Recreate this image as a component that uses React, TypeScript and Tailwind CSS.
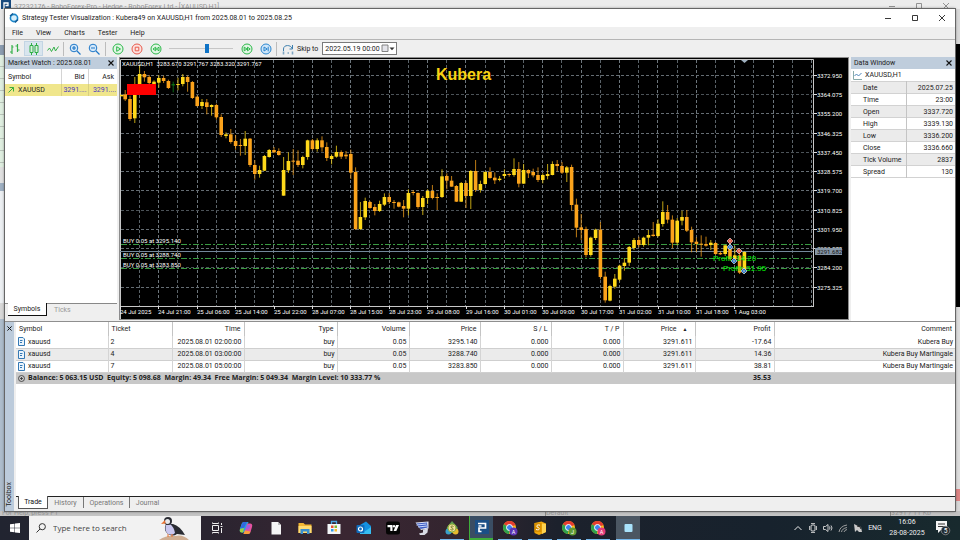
import React from "react";

type Bar = [number, number, number, number, string];

/* Each bar: high, body top, body bottom, low (thirds of a pixel below the base) and colour key. */
const SESSIONS: { base: number; first: number; bars: Bar[] }[] = [
  {
    base: 55,
    first: 0,
    bars: [
      [118, 120, 124, 124, "Y"], [105, 118, 133, 138, "O"], [122, 132, 192, 198, "O"], [66, 88, 190, 204, "Y"],
      [30, 57, 90, 95, "Y"], [48, 57, 67, 80, "O"], [60, 66, 84, 90, "O"], [76, 80, 88, 95, "Y"],
      [60, 69, 83, 98, "Y"], [62, 69, 78, 84, "O"], [74, 78, 99, 102, "O"], [80, 88, 90, 112, "G"],
      [68, 87, 90, 106, "Y"], [57, 66, 87, 94, "Y"], [62, 66, 81, 110, "O"], [78, 81, 129, 132, "O"],
      [121, 125, 153, 155, "O"], [132, 141, 153, 162, "Y"], [132, 142, 156, 178, "O"], [148, 150, 156, 182, "Y"],
      [146, 150, 187, 194, "O"], [178, 186, 240, 246, "O"], [232, 238, 243, 250, "Y"], [222, 238, 261, 266, "O"],
      [240, 258, 273, 284, "O"], [252, 270, 273, 302, "O"], [228, 251, 273, 300, "Y"], [249, 251, 330, 336, "O"],
      [315, 330, 357, 374, "O"], [332, 345, 357, 368, "Y"], [300, 303, 347, 348, "Y"], [282, 285, 306, 308, "Y"],
      [276, 285, 292, 294, "O"], [280, 288, 300, 302, "O"], [306, 345, 422, 422, "Y"], [292, 318, 346, 354, "Y"],
      [282, 317, 320, 360, "O"], [286, 317, 330, 336, "O"], [302, 306, 330, 340, "Y"], [254, 256, 306, 314, "Y"],
      [252, 256, 282, 286, "O"], [250, 256, 282, 290, "Y"], [244, 256, 277, 290, "O"], [262, 276, 309, 318, "O"],
      [298, 303, 312, 328, "Y"], [272, 291, 305, 308, "Y"], [286, 291, 305, 312, "O"], [288, 299, 304, 312, "O"],
      [284, 297, 353, 372, "O"],
    ],
  },
  {
    base: 130,
    first: 49,
    bars: [
      [112, 126, 297, 300, "O"], [216, 261, 297, 300, "Y"], [203, 213, 262, 270, "Y"], [213, 216, 234, 236, "O"],
      [222, 231, 243, 256, "O"], [212, 222, 243, 246, "Y"], [190, 201, 224, 228, "Y"], [189, 201, 216, 222, "O"],
      [210, 216, 219, 236, "O"], [215, 217, 230, 232, "O"], [210, 228, 236, 262, "O"], [178, 189, 236, 256, "Y"],
      [180, 186, 189, 196, "O"], [187, 189, 231, 236, "O"], [198, 204, 231, 255, "Y"], [178, 183, 204, 222, "Y"],
      [165, 183, 204, 208, "O"], [190, 201, 203, 240, "O"], [118, 139, 201, 204, "Y"], [130, 138, 152, 178, "O"],
      [138, 152, 170, 170, "O"], [165, 168, 215, 216, "O"], [156, 159, 215, 216, "Y"], [152, 159, 198, 234, "O"],
      [120, 123, 198, 237, "Y"], [90, 123, 180, 186, "O"], [152, 162, 180, 188, "Y"], [124, 126, 162, 164, "Y"],
      [112, 126, 144, 146, "O"], [127, 143, 151, 162, "O"], [138, 146, 150, 154, "Y"], [118, 132, 138, 146, "Y"],
      [130, 132, 135, 140, "O"], [85, 117, 135, 140, "Y"], [96, 117, 161, 172, "O"], [102, 120, 161, 161, "Y"],
      [118, 120, 130, 144, "O"], [116, 126, 136, 142, "O"], [112, 135, 150, 156, "O"], [130, 135, 150, 160, "Y"],
      [102, 132, 138, 148, "Y"], [94, 102, 135, 136, "Y"], [90, 102, 108, 124, "O"], [96, 108, 128, 132, "O"],
      [108, 112, 128, 156, "Y"], [104, 111, 225, 242, "O"],
    ],
  },
  {
    base: 140,
    first: 95,
    bars: [
      [176, 194, 263, 292, "O"], [222, 262, 270, 300, "O"], [260, 267, 345, 352, "O"], [290, 293, 345, 350, "Y"],
      [266, 269, 294, 300, "Y"], [246, 269, 411, 418, "O"], [395, 410, 481, 488, "O"], [434, 438, 482, 484, "Y"],
      [402, 416, 440, 446, "Y"], [374, 377, 419, 424, "Y"], [354, 368, 378, 392, "Y"], [318, 321, 368, 378, "Y"],
      [294, 300, 324, 330, "Y"], [290, 300, 315, 322, "O"], [290, 293, 315, 320, "Y"], [270, 285, 293, 316, "Y"],
      [246, 284, 288, 290, "O"], [238, 251, 288, 292, "Y"], [184, 216, 252, 260, "Y"], [195, 216, 239, 250, "O"],
      [226, 239, 308, 325, "O"], [234, 242, 308, 316, "Y"], [212, 231, 242, 256, "Y"], [210, 231, 272, 276, "O"],
      [260, 270, 307, 337, "O"], [292, 305, 312, 336, "O"], [286, 311, 314, 350, "O"], [290, 312, 317, 320, "O"],
      [300, 308, 315, 330, "Y"], [306, 309, 342, 345, "O"], [334, 339, 343, 345, "O"], [314, 316, 342, 348, "Y"],
      [300, 316, 357, 362, "O"], [318, 346, 358, 362, "Y"], [336, 346, 398, 402, "O"], [334, 336, 398, 402, "Y"],
    ],
  },
];

const COLORS: Record<string, string> = { Y: "#ffd91a", O: "#fba31c", G: "#0c8a1c" };

const PRICES = ["3372.950", "3364.075", "3355.200", "3346.325", "3337.450", "3328.575", "3319.700", "3310.825", "3301.950", "3293.075", "3284.200", "3275.325"];
const TIMES = ["24 Jul 2025", "24 Jul 21:00", "25 Jul 06:00", "25 Jul 14:00", "25 Jul 22:00", "28 Jul 07:00", "28 Jul 15:00", "28 Jul 23:00", "29 Jul 08:00", "29 Jul 16:00", "30 Jul 01:00", "30 Jul 09:00", "30 Jul 17:00", "31 Jul 02:00", "31 Jul 10:00", "31 Jul 18:00", "1 Aug 03:00"];
const ORDERS: [number, string][] = [[244, "BUY 0.05 at 3295.140"], [258, "BUY 0.05 at 3288.740"], [268, "BUY 0.05 at 3283.850"]];

function Chart() {
  return (
    <svg viewBox="119 57 730 264" className="block h-full w-full" role="img" aria-label="XAUUSD,H1 chart" fontFamily="Roboto, sans-serif" fontSize="6">
      <rect x="119" y="57" width="730" height="263" fill="#8c8c8c" />
      <rect x="120" y="58" width="728" height="261" fill="#000" />
      <path d="M120.5 319V59.5H813.5V306.5M120 306.5H814" stroke="#c8c8c8" fill="none" />
      {Array.from({ length: 36 }, (_, i) => {
        const x = Math.floor(139.4 + i * 19.2) + 0.5;
        return <path key={i} d={`M${x} 60V306`} stroke={i % 2 ? "#6d767c" : "#5a6268"} strokeDasharray="3 2" />;
      })}
      {PRICES.map((p, i) => {
        const y = Math.floor(75.4 + i * 19.24) + 0.5;
        return (
          <g key={p}>
            <path d={`M121 ${y}H813`} stroke={i % 3 === 1 ? "#4c5358" : "#656d73"} strokeDasharray="3 2" />
            <path d={`M814 ${y}H817`} stroke="#ddd" />
            <text x="817" y={y + 2.5} fill="#fff">{p}</text>
          </g>
        );
      })}
      <path d="M120 251.5H813" stroke="#73879a" />
      {ORDERS.map(([y, label]) => (
        <g key={label}>
          <path d={`M121 ${y + 0.5}H813`} stroke="#3a9a42" strokeDasharray="6 2 2 2" />
          <text x="123" y={y - 1} fill="#fff">{label}</text>
        </g>
      ))}
      {SESSIONS.map((s) =>
        s.bars.map(([h, t, b, l, c], i) => {
          const x = 120.4 + (s.first + i) * 4.8;
          const y = (v: number) => s.base + v / 3;
          return (
            <g key={s.first + i} fill={COLORS[c]}>
              <rect x={x - 0.5} y={y(h)} width="1" height={(l - h) / 3} opacity="0.75" />
              <rect x={Math.max(x - 1.8, 120)} y={y(t)} width="3.6" height={Math.max((b - t) / 3, 1)} />
            </g>
          );
        })
      )}
      <rect x="127" y="84" width="29" height="11" fill="#f00" />
      <text x="122" y="65.5" fill="#fff">XAUUSD,H1&nbsp; 3283.670 3291.767 3283.320 3291.767</text>
      <text x="436" y="80" fontSize="16" fontWeight="700" fill="#f8d313" fontFamily="'Liberation Sans', sans-serif">Kubera</text>
      <path d="M741 60h7l-3.500 3z" fill="#9fb0bf" />
      <g fontFamily="'Liberation Sans', sans-serif" fontSize="8" fill="#00f000">
        <text x="713" y="261">Profit: 14.20</text>
        <text x="723" y="271">Profit: 31.95</text>
      </g>
      {[[730, 241, 1], [730, 247, 0], [739, 251, 1], [734, 261, 0], [744, 271, 0]].map(([x, y, sell]) => (
        <g key={`${x}-${y}`}>
          <path d={`M${x - 3} ${y}l3 -3l3 3l-3 3z`} fill={sell ? "#e0503c" : "#2a78c8"} stroke="#f0f0f0" strokeWidth="0.6" />
          <circle cx={x} cy={y} r="0.8" fill="#f5d8c8" />
        </g>
      ))}
      <rect x="815" y="248" width="27" height="7" fill="#8596a6" />
      <text x="817" y="254" fill="#111">3291.682</text>
      {TIMES.map((t, i) => {
        const x = Math.floor(120.4 + i * 38.4);
        return (
          <g key={t}>
            <path d={`M${x + 0.5} 306V309`} stroke="#ddd" />
            <text x={x} y="314" fill="#fff">{t}</text>
          </g>
        );
      })}
    </svg>
  );
}

function Tool({ label, active, children }: { label: string; active?: boolean; children: React.ReactNode }) {
  return (
    <button aria-label={label} className={`flex h-[15px] w-[19px] items-center justify-center ${active ? "border border-[#c3d5e4] bg-[#d9e5ee]" : ""}`}>
      <svg viewBox="0 0 12 12" className="h-3 w-3" fill="none">{children}</svg>
    </button>
  );
}

const Sep = ({ wide }: { wide?: boolean }) => <span className={`h-3.5 w-px bg-[#bcbcbc] ${wide ? "mx-0.5" : "mx-px"}`} />;

function Ring({ color, fill, children }: { color: string; fill: string; children: React.ReactNode }) {
  return (
    <g stroke={color} strokeWidth="1" strokeLinejoin="round">
      <circle cx="6" cy="6" r="5" fill={fill} />
      {children}
    </g>
  );
}

function WindowButtons({ muted }: { muted?: boolean }) {
  return (
    <div className={`flex items-center ${muted ? "text-[#888]" : "text-[#222]"}`}>
      {["M1 4.500H7", "M1.500 1.500H6.500V6.500H1.500Z", "M1 1L7 7M7 1L1 7"].map((d, i) => (
        <button key={d} aria-label={["Minimize", "Maximize", "Close"][i]} className="flex w-[27px] justify-center">
          <svg viewBox="0 0 8 8" className="h-2 w-2" fill="none" stroke="currentColor" strokeWidth="0.9"><path d={d} /></svg>
        </button>
      ))}
    </div>
  );
}

function Toolbar() {
  return (
    <div className="flex h-[17px] shrink-0 items-center bg-[#efefef]">
      <Tool label="Bar chart"><path d="M3 2v9M1 9h2M3 4h1.500M8.500 1v8M6.500 3h2M8.500 7h2" stroke="#35b04a" strokeWidth="1.200" /></Tool>
      <Tool label="Candlesticks" active><path d="M3.500 0v12M8.500 0v12" stroke="#2fae45" /><path d="M2 2.500h3v7H2zM7 2.500h3v7H7z" fill="#d9f0df" stroke="#2fae45" /></Tool>
      <Tool label="Line chart"><path d="M0.500 7.500L2.500 5L4.500 8.500L7 4L8.500 8L11.500 3.500" stroke="#35b04a" /></Tool>
      <Sep />
      <Tool label="Zoom in"><circle cx="5" cy="5" r="3.800" fill="#d6e9fa" stroke="#1f78c8" /><path d="M3 5h4M5 3v4M8 8l3.500 3.500" stroke="#1f78c8" strokeWidth="1.200" /></Tool>
      <Tool label="Zoom out"><circle cx="5" cy="5" r="3.800" fill="#d6e9fa" stroke="#1f78c8" /><path d="M3 5h4M8 8l3.500 3.500" stroke="#1f78c8" strokeWidth="1.200" /></Tool>
      <Sep wide />
      <Tool label="Play"><Ring color="#2db84a" fill="#e2f6e5"><path d="M4.700 3.700L8.500 6L4.700 8.300z" fill="#e2f6e5" /></Ring></Tool>
      <Tool label="Stop"><Ring color="#e8594b" fill="#fce3e0"><path d="M4.200 4.200h3.600v3.600H4.200z" /></Ring></Tool>
      <Tool label="Slower"><Ring color="#2db84a" fill="#e2f6e5"><path d="M5.700 4.200L3 6l2.700 1.800zM9 4.200L6.300 6L9 7.800z" /></Ring></Tool>
      <input
        type="range"
        aria-label="Speed"
        defaultValue={60}
        className="mx-1 h-3 w-16 appearance-none bg-transparent [&::-webkit-slider-runnable-track]:h-px [&::-webkit-slider-runnable-track]:bg-[#c6c6c6] [&::-webkit-slider-thumb]:-mt-1 [&::-webkit-slider-thumb]:h-[9px] [&::-webkit-slider-thumb]:w-1 [&::-webkit-slider-thumb]:appearance-none [&::-webkit-slider-thumb]:bg-[#0f73c6]"
      />
      <Tool label="Faster"><Ring color="#2db84a" fill="#e2f6e5"><path d="M3.200 4.200L6 6L3.200 7.800zM6.500 4.200L9.200 6L6.500 7.800z" /></Ring></Tool>
      <Tool label="Next bar"><Ring color="#2a86cf" fill="#cfe6fa"><path d="M4 4L7.200 6L4 8zM8.200 3.700v4.600" /></Ring></Tool>
      <Sep />
      <Tool label="Skip"><path d="M1.500 8V6C1.500 1.500 9 1.500 10 5.500M10.500 2v4h-3" stroke="#3d7fae" /><path d="M1.500 8.500v3M5.500 10h1.500M10.500 8.500v3" stroke="#7fa6c2" strokeWidth="1.600" /></Tool>
      <label htmlFor="skip" className="pr-1">Skip to</label>
      <div className="flex h-[13px] w-[75px] items-center border border-[#7a7a7a] bg-white pl-0.5">
        <input id="skip" defaultValue="2022.05.19 00:00" className="h-full w-14 min-w-0 bg-transparent outline-none" />
        <button aria-label="Open calendar" className="flex items-center">
          <svg viewBox="0 0 14 9" className="h-[9px] w-3.5"><path d="M1 1h6v6.500H1z" fill="#e4e4ea" stroke="#777" strokeWidth="0.900" /><path d="M8.500 3.500h5L11 6.200z" fill="#333" /></svg>
        </button>
      </div>
    </div>
  );
}

function PanelHead({ title }: { title: string }) {
  return (
    <div className="flex h-3 shrink-0 items-center justify-between bg-[#bfcddc] pr-[3px] pl-[3px] text-[#222]">
      <h2>{title}</h2>
      <button aria-label={`Close ${title}`}>
        <svg viewBox="0 0 6 6" className="h-1.5 w-1.5" stroke="#111" strokeWidth="1.100"><path d="M0.500 0.500l5 5M5.500 0.500l-5 5" /></svg>
      </button>
    </div>
  );
}

function MarketWatch() {
  return (
    <section className="flex w-[112px] shrink-0 flex-col bg-white">
      <PanelHead title="Market Watch : 2025.08.01" />
      <table className="w-full table-fixed">
        <thead>
          <tr className="h-[15px]">
            <th className="w-[56px] border-r border-[#d4d4d4] pl-[3px] text-left font-normal">Symbol</th>
            <th className="w-[27px] border-r border-[#d4d4d4] pr-[3px] text-right font-normal">Bid</th>
            <th className="pr-[3px] text-right font-normal">Ask</th>
          </tr>
        </thead>
        <tbody>
          <tr className="h-3 bg-[#f0e68c]">
            <td className="border-r border-[#d8cf80]">
              <span className="flex items-center gap-1 pl-[3px]">
                <svg viewBox="0 0 6 6" className="h-1.5 w-1.5" fill="none" stroke="#3cae3c"><path d="M0.500 5.500L5.500 0.500M1.500 0.500h4v4" /></svg>
                XAUUSD
              </span>
            </td>
            <td className="border-r border-[#d8cf80] pr-px text-right text-[#4a3cc0]">3291....</td>
            <td className="pr-px text-right text-[#4a3cc0]">3291....</td>
          </tr>
        </tbody>
      </table>
      <div className="flex-1" />
      <div className="flex h-[18px] items-start border-t border-[#888] bg-[#efefef] pl-[3px]">
        <button className="-mt-px h-[13px] w-[39px] border-r border-b border-[#111] bg-white">Symbols</button>
        <button className="h-3 px-[7px] text-[#999]">Ticks</button>
      </div>
    </section>
  );
}

const DATA = [["Date", "2025.07.25"], ["Time", "23:00"], ["Open", "3337.720"], ["High", "3339.130"], ["Low", "3336.200"], ["Close", "3336.660"], ["Tick Volume", "2837"], ["Spread", "130"]];

function DataWindow() {
  return (
    <section className="flex w-[104px] shrink-0 flex-col bg-white">
      <PanelHead title="Data Window" />
      <div className="flex h-3 items-center gap-[3px] pl-[2px]">
        <svg viewBox="0 0 9 9" className="h-[9px] w-[9px]" fill="none"><path d="M0.500 0v8.500H9" stroke="#8aa" /><path d="M1.500 5L3.500 3L5.500 5L8.500 2" stroke="#3a78b0" strokeWidth="0.900" /></svg>
        XAUUSD,H1
      </div>
      <table className="w-full">
        <tbody>
          {DATA.map(([k, v]) => (
            <tr key={k} className="h-3 border-t border-[#d2d2d2] odd:bg-[#ebebeb] last:border-b">
              <th scope="row" className="w-[55px] border-r border-[#c4c4c4] p-0 pl-3 text-left font-normal whitespace-nowrap">{k}</th>
              <td className="p-0 pr-[2px] text-right">{v}</td>
            </tr>
          ))}
        </tbody>
      </table>
    </section>
  );
}

const HEADS = ["Symbol", "Ticket", "Time", "Type", "Volume", "Price", "S / L", "T / P", "Price", "Profit", "Comment"];
const TRADES = [
  ["xauusd", "2", "2025.08.01 02:00:00", "buy", "0.05", "3295.140", "0.000", "0.000", "3291.611", "-17.64", "Kubera Buy"],
  ["xauusd", "4", "2025.08.01 03:00:00", "buy", "0.05", "3288.740", "0.000", "0.000", "3291.611", "14.36", "Kubera Buy Martingale"],
  ["xauusd", "7", "2025.08.01 05:00:00", "buy", "0.05", "3283.850", "0.000", "0.000", "3291.611", "38.81", "Kubera Buy Martingale"],
];

function Toolbox() {
  return (
    <section className="flex min-h-0 flex-1 border-t border-[#8f8f8f]">
      <div className="flex w-[9px] shrink-0 flex-col items-center justify-between bg-[#bccbdb] py-1">
        <button aria-label="Close Toolbox">
          <svg viewBox="0 0 6 6" className="h-[5px] w-[5px]" stroke="#111" strokeWidth="1.200"><path d="M0.500 0.500l5 5M5.500 0.500l-5 5" /></svg>
        </button>
        <h2 className="rotate-180 leading-[9px] [writing-mode:vertical-rl]">Toolbox</h2>
      </div>
      <div className="ml-[2px] flex min-w-0 flex-1 flex-col bg-white">
        <table className="w-full table-fixed">
          <colgroup>
            <col className="w-[92px]" /><col className="w-16" /><col className="w-[72px]" /><col className="w-[93px]" /><col className="w-[72px]" /><col className="w-[71px]" /><col className="w-[71px]" /><col className="w-[72px]" /><col className="w-[72px]" /><col className="w-[79px]" /><col />
          </colgroup>
          <thead>
            <tr className="h-[14px]">
              {HEADS.map((h, i) => (
                <th key={i} className={`border-r border-[#c4c4c4] p-0 font-normal last:border-r-0 ${i < 2 ? "pl-[3px] text-left" : "pr-[3px] text-right"}`}>
                  {h}{i === 8 && <span className="pr-1 pl-1.5 text-[5px]">▲</span>}
                </th>
              ))}
            </tr>
          </thead>
          <tbody>
            {TRADES.map((row) => (
              <tr key={row[1]} className="h-3 border-b border-[#cfcfcf] even:bg-[#ebebeb]">
                {row.map((c, i) => (
                  <td key={i} className={`border-r border-[#d4d4d4] p-0 last:border-r-0 ${i < 2 ? "pl-[2px] text-left" : "pr-[2px] text-right"}`}>
                    {i === 0 ? (
                      <span className="flex items-center gap-[3px]">
                        <svg viewBox="0 0 7 9" className="h-[9px] w-[7px]" fill="#eaf4fc" stroke="#3579b4"><path d="M0.500 0.500h4.500l1.500 1.500v6.500h-6z" /><path d="M2 3.500h2.500M2 5.500h2" /></svg>
                        {c}
                      </span>
                    ) : c}
                  </td>
                ))}
              </tr>
            ))}
          </tbody>
          <tfoot>
            <tr className="h-3 bg-[#c8c8c8] font-['Open_Sans',sans-serif] font-bold">
              <td colSpan={9} className="p-0">
                <span className="flex items-center gap-[3px] pl-[2px] whitespace-pre">
                  <svg viewBox="0 0 7 7" className="h-[7px] w-[7px]" fill="none" stroke="#333" strokeWidth="0.800"><circle cx="3.500" cy="3.500" r="3" /><path d="M2 3.500h3M3.500 2v3" /></svg>
                  {"Balance: 5 063.15 USD  Equity: 5 098.68  Margin: 49.34  Free Margin: 5 049.34  Margin Level: 10 333.77 %"}
                </span>
              </td>
              <td className="p-0 pr-[3px] text-right">35.53</td>
              <td />
            </tr>
          </tfoot>
        </table>
        <div className="flex-1" />
        <div className="flex h-[15px] items-start border-t border-[#222] bg-[#efefef] pl-[2px] text-[#777]">
          <button className="-mt-px h-[13px] w-[30px] border-x border-b border-[#555] bg-white text-[#111]">Trade</button>
          <button className="h-3 w-[35px]">History</button>
          <button className="h-[11px] w-[47px] border-x border-[#777]">Operations</button>
          <button className="h-3 w-[35px]">Journal</button>
        </div>
      </div>
    </section>
  );
}

function TesterWindow() {
  return (
    <main className="absolute inset-x-[5px] top-[9px] bottom-[5px] flex flex-col bg-[#efefef] shadow-[0_0_3px_rgba(0,0,0,0.7)] outline outline-[#666]">
      <header className="flex h-[18px] shrink-0 items-center bg-white pl-1">
        <svg viewBox="0 0 10 10" className="h-2.5 w-2.5"><circle cx="5" cy="5" r="3.600" fill="#d7effb" stroke="#1b86c9" strokeWidth="1.600" /><path d="M1 3l3-2.500M9 6.500L6 9.500" stroke="#135b94" strokeWidth="1.400" /></svg>
        <h1 className="flex-1 pl-[3px] whitespace-nowrap">Strategy Tester Visualization : Kubera49 on XAUUSD,H1 from 2025.08.01 to 2025.08.25</h1>
        <WindowButtons />
      </header>
      <nav className="flex h-[13px] shrink-0 items-center gap-[13px] border-b border-[#b5b5b5] pl-[7px]">
        {["File", "View", "Charts", "Tester", "Help"].map((m) => <button key={m}>{m}</button>)}
      </nav>
      <Toolbar />
      <div className="flex h-[264px] shrink-0 justify-between">
        <MarketWatch />
        <div className="ml-[2px] min-w-0 flex-1"><Chart /></div>
        <div className="w-[2px]" />
        <DataWindow />
      </div>
      <Toolbox />
    </main>
  );
}

function TerminalWindow() {
  return (
    <div aria-hidden="true" className="flex h-full flex-col bg-[#d6d6d6] text-[#999]">
      <div className="flex h-[9px] shrink-0 items-center overflow-hidden bg-[#ececec]">
        <svg viewBox="0 0 10 10" className="h-2.5 w-3"><rect width="10" height="10" fill="#17497d" /><path d="M3 9V3h4v2.500H4.500" stroke="#fff" strokeWidth="1.300" fill="none" /></svg>
        <span className="flex-1 pt-1 pl-[2px] whitespace-nowrap">37232176 - RoboForex-Pro - Hedge - RoboForex Ltd - [XAUUSD,H1]</span>
        <div className="pt-[3px] pr-px"><WindowButtons muted /></div>
      </div>
      <div className="flex flex-1 justify-between">
        <div className="flex w-[5px] flex-col">
          <div className="h-9 bg-[#e6e6e6]" />
          <div className="h-2.5 bg-[#8b9cb0]" />
          <div className="h-28 bg-[repeating-linear-gradient(#dfeee0_0_11px,#b9c4ba_11px_12px)]" />
          <div className="h-4 bg-[#e0e0e0]" />
          <div className="h-2 bg-[#9fb0c2]" />
          <div className="h-28 bg-[#eceff2]" />
          <div className="h-4 bg-[#d8d8d8]" />
          <div className="flex-1 bg-[#aebdcc]" />
        </div>
        <div className="flex w-[5px] flex-col">
          <div className="h-[35px] bg-[#d9d9d9]" />
          <div className="h-[263px] bg-black" />
          <div className="flex-1 bg-[#ddd]" />
          <div className="h-3 bg-[#dd8585]" />
          <div className="h-2.5 bg-[#d8d8d8]" />
        </div>
      </div>
      <div className="flex h-[5px] shrink-0 items-end overflow-hidden bg-[#c4c4c4] leading-[5px]">
        <span className="w-[545px] pl-[2px]">For Help, press F1</span>
        <span className="flex-1 border-l border-[#888]">Default</span>
        <span className="w-[70px] border-l border-[#888]">3291 / 11 Kb</span>
      </div>
    </div>
  );
}

function Chrome({ badge, letter }: { badge: string; letter: string }) {
  return (
    <svg viewBox="0 0 16 16" className="h-4 w-4">
      <circle cx="7.500" cy="7.500" r="6.500" fill="#fbbc1a" />
      <path d="M7.500 7.500L1.900 4.200A6.500 6.500 0 0 1 13.600 5z" fill="#e53d30" />
      <path d="M7.500 7.500L1.900 4.200A6.500 6.500 0 0 0 7 14z" fill="#2fa24c" />
      <circle cx="7.500" cy="7.500" r="3" fill="#3f83f0" stroke="#fff" />
      <circle cx="11.500" cy="11.500" r="4" fill={badge} />
      <text x="11.500" y="13.500" fontSize="5.500" fill="#fff" textAnchor="middle">{letter}</text>
    </svg>
  );
}

function Box({ children }: { children: React.ReactNode }) {
  return <svg viewBox="0 0 16 16" className="h-4 w-4">{children}</svg>;
}

const APPS: { name: string; cls?: string; icon: React.ReactNode }[] = [
  { name: "Task View", icon: <Box><path d="M3.500 5.500h6v5h-6zM3.500 3.500V2.500M9.500 3.500V2.500M3.500 12.500v1M9.500 12.500v1M3.500 3.500h6M3.500 12.500h6M12.500 3v2M12.500 8v5M11.500 6.500h2" stroke="#eee" fill="none" /></Box> },
  { name: "Copilot", icon: <Box><path d="M6 2h4.500l-4 10.500H4Q1 12.500 2 9L3.500 4Q4 2 6 2z" fill="#27a5d8" /><path d="M2.300 8L4 4q.5-2 2-2h3L6 8z" fill="#3268df" /><path d="M2 9l4-1-1 4.500H4Q1 12.500 2 9z" fill="#9bd43c" /><path d="M9.500 3.500H12q3 0 2 3.500l-1.500 5Q12 14 10 14H5.500z" fill="#e653a0" /><path d="M9 5h3.500L11 9l-4 1z" fill="#a45be0" /><path d="M5.500 14L7 10.500l5.500 1Q12 14 10 14z" fill="#f7a03a" /></Box> },
  { name: "Document", icon: <Box><path d="M3.500 2h6.500l3 3v9.500h-9.500z" fill="#f5f5f5" /><path d="M10 2v3h3z" fill="#bbb" /></Box> },
  { name: "File Explorer", icon: <Box><path d="M1.500 3h5l1.500 1.500h6.500V13H1.500z" fill="#f2b632" /><path d="M1.500 6h13v7h-13z" fill="#ffdc73" /><path d="M3.500 9h9v5h-2.500v-2.500H6V14H3.500z" fill="#3b8fd0" /></Box> },
  { name: "Store", icon: <Box><path d="M5.500 4V1.500h5V4" stroke="#49a5e0" fill="none" strokeWidth="1.300" /><path d="M1.500 4h13v10h-13z" fill="#f2f6f8" /><path d="M5 5.500h2.500V8H5z" fill="#e5502f" /><path d="M8.500 5.500H11V8H8.500z" fill="#7dba2f" /><path d="M5 9h2.500v2.500H5z" fill="#2f9be8" /><path d="M8.500 9H11v2.500H8.500z" fill="#f7ba2e" /></Box> },
  { name: "Outlook", icon: <Box><path d="M4 5l6-3.500L15 6v8H4z" fill="#1490df" /><path d="M4 8l5.500 3L15 7v7H4z" fill="#35bdf2" /><rect x="0.500" y="5" width="8" height="8" rx="1" fill="#0f6cbd" /><circle cx="4.500" cy="9" r="2" stroke="#fff" fill="none" strokeWidth="1.200" /></Box> },
  { name: "TradingView", icon: <Box><rect x="1" y="1.500" width="14" height="13" rx="2.500" fill="#050505" /><path d="M2.500 5h5v6H5.300V7.300H2.500zM11 5h3l-2.700 6H8.600z" fill="#fff" /><circle cx="9" cy="6.200" r="1.200" fill="#fff" /></Box> },
  { name: "Remote", icon: <Box><path d="M1.500 2.500l13-1v7L7 10z" fill="#dfe3f2" /><path d="M2.500 3.500l10.500-1 .5 5L6.500 9z" fill="#3c5cc0" /><path d="M2.500 5l10-1M4 7l9-1" stroke="#c8d6ff" /><path d="M9 9.500l5-1-.5 4-3 2.500H6l-1-1.500 4-1z" fill="#d9dbe5" /></Box> },
  { name: "Trader", cls: "border-b border-[#76b9ed]", icon: <Box><path d="M8 1l5.500 6L14 13H2L3 7z" fill="#5c9c51" /><circle cx="4.500" cy="11.500" r="3" fill="#3aa0c8" /><circle cx="11.500" cy="11.500" r="3" fill="#e8b92d" /><circle cx="8" cy="8" r="4" fill="#f2e2a0" stroke="#8fae3c" /><path d="M9.500 6.500C7 5 6 7.500 8 8s1.500 3-1.500 1.500" stroke="#6a7a20" fill="none" /></Box> },
  { name: "RoboForex", cls: "border-b-2 border-l border-[#3fae3a] bg-[#3a4d63]", icon: <Box><rect x="1" y="1" width="14" height="14" fill="#1b4f86" /><path d="M4 4.500h7.500v4.500H5v3.500h2.500M4.500 7h3" stroke="#fff" fill="none" strokeWidth="1.700" /></Box> },
  { name: "Chrome A", cls: "border-b border-[#76b9ed]", icon: <Chrome badge="#5b35b5" letter="A" /> },
  { name: "Sticky", cls: "border-b border-[#76b9ed]", icon: <Box><path d="M2.500 3l7-1.500 4.500 2V12l-7 3-4.500-2z" fill="#f0a80c" /><path d="M10 3.500l4 .5v8l-4 2z" fill="#ffd34f" /><path d="M2.500 3h7v9h-7z" fill="#d99000" /><path d="M8 5.200C4.500 4 4 7 6 7.500s2 3.200-2 2" stroke="#fff" fill="none" /></Box> },
  { name: "Chrome J", cls: "border-b border-[#76b9ed]", icon: <Chrome badge="#5f9a35" letter="J" /> },
  { name: "Chrome K", cls: "border-b border-[#76b9ed]", icon: <Chrome badge="#e23b79" letter="A" /> },
  { name: "Tester", cls: "border-b border-[#76b9ed] bg-[#4b5662]", icon: <Box><rect x="4.500" y="4" width="8" height="8" rx="1" fill="#a9e2fb" /></Box> },
];

function Taskbar() {
  return (
    <footer className="flex h-6 shrink-0 items-center bg-[linear-gradient(90deg,#212430_0%,#2a2430_22%,#3a2632_36%,#33252f_48%,#1c212c_58%,#17222d_80%,#182a2e_100%)] text-[#eee]">
      <button aria-label="Start" className="flex w-[29px] justify-center">
        <svg viewBox="0 0 10 10" className="h-2.5 w-2.5" fill="#fff"><path d="M0 1.300L4.500.7v4H0zM5 .6L10 0v4.700H5zM0 5.300h4.500v4L0 8.700zM5 5.300h5V10l-5-.6z" /></svg>
      </button>
      <label className="flex h-6 w-[172px] items-center bg-[#f2f2f2] pl-[7px] text-[#444]">
        <svg viewBox="0 0 10 10" className="h-2.5 w-2.5" fill="none" stroke="#333"><circle cx="6.300" cy="3.700" r="3.100" /><path d="M4 6L.5 9.500" /></svg>
        <input placeholder="Type here to search" aria-label="Search" className="ml-[7px] w-[90px] bg-transparent font-['Open_Sans',sans-serif] text-[8px] outline-none placeholder:text-[#444]" />
        <svg viewBox="0 0 32 24" className="ml-4 h-6 w-8">
          <path d="M0 24q8-5 16-4 8-2 14 4z" fill="#cfae92" />
          <path d="M7 8q-3 6 2 10 5 3 9 0l8 1q-5-9-12-11z" fill="#2a2c33" />
          <path d="M7 9q-2 5 2 9 5 2 7-1-1-6-5-9z" fill="#c9c6ee" />
          <circle cx="9" cy="5" r="4" fill="#2a2c33" /><circle cx="8.500" cy="5.500" r="2.500" fill="#e8e8ea" />
          <path d="M6 4L2 8l4.500-.5z" fill="#e8702e" /><path d="M9 18v3M13 18v3" stroke="#e8702e" />
        </svg>
      </label>
      <div className="ml-1 flex h-6 w-[435px] items-center justify-between">
        {APPS.map((a) => (
          <button key={a.name} aria-label={a.name} className={`flex h-6 w-6 items-center justify-center ${a.cls ?? ""}`}>{a.icon}</button>
        ))}
      </div>
      <div className="ml-auto flex items-center">
        <div className="flex items-center gap-[5px]">
          <svg viewBox="0 0 10 10" className="h-2.5 w-2.5" fill="none" stroke="#eee"><path d="M1.500 7L5 3.500L8.500 7" /></svg>
          <svg viewBox="0 0 10 10" className="h-2.5 w-2.5" fill="none" stroke="#ddd"><rect x="3" y="2" width="4" height="6" rx="1" /><path d="M3 .5h4M3 9.500h4M1.500 3v4M8.500 3v4" strokeWidth="0.800" /></svg>
          <svg viewBox="0 0 10 10" className="h-2.5 w-2.5" fill="none" stroke="#ddd" strokeWidth="0.900"><path d="M.5 3.500h2L5 1.500v7L2.500 6.500h-2zM6.500 3.500q1 1.500 0 3M8 2.500q2 2.500 0 5" /></svg>
          <svg viewBox="0 0 10 10" className="h-2.5 w-2.5" fill="none" stroke="#aaa" strokeWidth="0.900"><path d="M1 9Q2 3 9 2M3.500 9Q4 5.500 9 4.500M6 9q.5-2 3-2.500" /></svg>
          <svg viewBox="0 0 10 10" className="h-2.5 w-2.5"><path d="M1 1l4 2 3 1 1 5H6L4 7 2 9z" fill="#c9c9c9" /><path d="M4 3q4 0 4 3" stroke="#222" fill="none" /></svg>
        </div>
        <span className="w-6 text-center">ENG</span>
        <time className="w-10 text-center leading-[11px]">16:06<br />28-08-2025</time>
        <button aria-label="Notifications" className="w-[33px] pl-[8px]">
          <svg viewBox="0 0 16 16" className="h-4 w-4"><path d="M1 1h11v9H6l-3 3v-3H1z" fill="#f4f4f4" /><path d="M3 4h7M3 6.500h7" stroke="#333" /><circle cx="10.500" cy="10.500" r="4.300" fill="#222c33" stroke="#999" strokeWidth="0.700" /><text x="10.500" y="13" fontSize="6.500" fill="#fff" textAnchor="middle">5</text></svg>
        </button>
      </div>
    </footer>
  );
}

export default function App() {
  return (
    <div className="flex h-screen w-full flex-col overflow-hidden font-['Roboto','Noto_Sans',sans-serif] text-[7px] leading-[10px] text-[#222]">
      <div className="relative min-h-0 flex-1">
        <TerminalWindow />
        <TesterWindow />
      </div>
      <Taskbar />
    </div>
  );
}
